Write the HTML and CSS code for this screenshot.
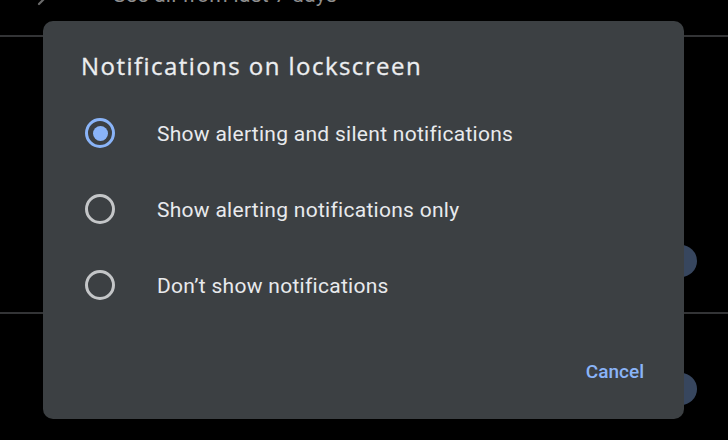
FILE: index.html
```html
<!DOCTYPE html>
<html>
<head>
<meta charset="utf-8">
<link rel="stylesheet" href="styles.css">
</head>
<body>
<div class="screen">
  <div class="list">
    <div class="row row-top">
      <svg class="chev" width="12" height="12" viewBox="0 0 12 12"><path d="M2 8 L8 2" stroke="#6a6a6a" stroke-width="2.2" fill="none" stroke-linecap="round"/></svg>
      <span class="row-text">See all from last 7 days</span>
    </div>
    <div class="divider"></div>
    <div class="row row-mid">
      <span class="thumb"></span>
    </div>
    <div class="divider"></div>
    <div class="row row-bottom">
      <span class="thumb"></span>
    </div>
  </div>

  <div class="dialog">
    <h1 class="title">Notifications on lockscreen</h1>
    <div class="options">
      <div class="option"><span class="radio checked"></span><span class="label">Show alerting and silent notifications</span></div>
      <div class="option"><span class="radio"></span><span class="label">Show alerting notifications only</span></div>
      <div class="option"><span class="radio"></span><span class="label">Don’t show notifications</span></div>
    </div>
    <div class="actions"><span class="btn">Cancel</span></div>
  </div>
</div>
</body>
</html>
```

FILE: styles.css
```css
html, body {
  margin: 0;
  padding: 0;
  background: #000;
}
.screen {
  position: relative;
  width: 728px;
  height: 440px;
  overflow: hidden;
  font-family: Roboto, "Noto Sans", sans-serif;
}
.list {
  display: flex;
  flex-direction: column;
  margin-top: -30px;
}
.row {
  display: flex;
  align-items: center;
}
.row-top {
  height: 65px;
  align-items: flex-start;
}
.chev {
  margin: 26px 0 0 37px;
}
.row-text {
  margin-left: 64px;
  margin-top: 15px;
  font-size: 21px;
  line-height: 20px;
  letter-spacing: 0.3px;
  color: #8f8f8f;
}
.divider {
  height: 2px;
  background: #333436;
}
.row-mid {
  height: 275px;
  justify-content: flex-end;
  align-items: flex-start;
}
.row-bottom {
  height: 160px;
  justify-content: flex-end;
  align-items: flex-start;
}
.row-mid .thumb { margin-top: 208px; }
.row-bottom .thumb { margin-top: 59px; }
.thumb {
  width: 32px;
  height: 32px;
  border-radius: 50%;
  background: #37465e;
  margin-right: 31px;
}
.dialog {
  position: absolute;
  left: 43px;
  top: 21px;
  width: 641px;
  height: 398px;
  background: #3c4043;
  border-radius: 10px;
  display: flex;
  flex-direction: column;
  box-sizing: border-box;
}
.title {
  margin: 30px 0 0 38px;
  font-family: "Open Sans", Roboto, sans-serif;
  font-weight: 500;
  font-size: 24px;
  line-height: 30px;
  letter-spacing: 1.45px;
  color: #eceef0;
  -webkit-text-stroke: 0.3px #eceef0;
}
.options {
  display: flex;
  flex-direction: column;
  margin-top: 15px;
}
.option {
  display: flex;
  align-items: center;
  height: 76px;
  padding-left: 42px;
}
.radio {
  width: 30px;
  height: 30px;
  box-sizing: border-box;
  border: 3px solid #c4c6c8;
  border-radius: 50%;
  display: flex;
  align-items: center;
  justify-content: center;
  flex-shrink: 0;
  margin-top: -2px;
}
.radio.checked {
  border-color: #8ab4f8;
}
.radio.checked::after {
  content: "";
  width: 15px;
  height: 15px;
  border-radius: 50%;
  background: #8ab4f8;
}
.label {
  margin-left: 42px;
  font-size: 21px;
  letter-spacing: 0.28px;
  color: #e8eaed;
}
.actions {
  margin-top: auto;
  display: flex;
  justify-content: flex-end;
  padding: 0 40px 36px 0;
}
.btn {
  font-family: Roboto, sans-serif;
  font-weight: 500;
  font-size: 19px;
  line-height: 22px;
  color: #8ab4f8;
}
```
